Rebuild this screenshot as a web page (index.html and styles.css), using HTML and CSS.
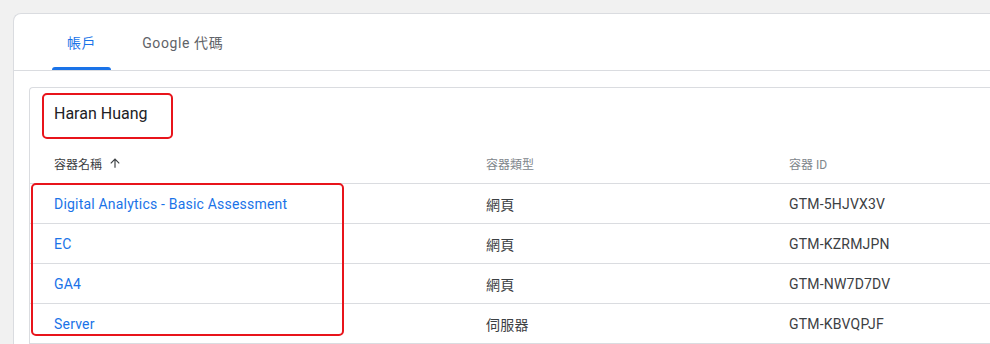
FILE: index.html
```html
<!DOCTYPE html>
<html lang="zh-Hant">
<head>
  <meta charset="UTF-8" />
  <meta name="viewport" content="width=device-width, initial-scale=1" />
  <title>帳戶 - Google 代碼管理工具</title>
  <link rel="stylesheet" href="styles.css">
</head>
<body>
  <div class="page-card">
    <div class="tabs">
      <div class="tab active">帳戶</div>
      <div class="tab">Google 代碼</div>
    </div>

    <div class="account-card">
      <div class="account-name">Haran Huang</div>

      <div class="row header">
        <div class="cell sorted">容器名稱
          <svg class="sort-icon" viewBox="0 0 24 24" width="14" height="14">
            <path d="M4 12l1.41 1.41L11 7.83V20h2V7.83l5.58 5.59L20 12l-8-8-8 8z" fill="currentColor"/>
          </svg>
        </div>
        <div class="cell">容器類型</div>
        <div class="cell">容器 ID</div>
      </div>

      <div class="row">
        <div class="cell"><a href="#">Digital Analytics - Basic Assessment</a></div>
        <div class="cell">網頁</div>
        <div class="cell">GTM-5HJVX3V</div>
      </div>
      <div class="row">
        <div class="cell"><a href="#">EC</a></div>
        <div class="cell">網頁</div>
        <div class="cell">GTM-KZRMJPN</div>
      </div>
      <div class="row">
        <div class="cell"><a href="#">GA4</a></div>
        <div class="cell">網頁</div>
        <div class="cell">GTM-NW7D7DV</div>
      </div>
      <div class="row">
        <div class="cell"><a href="#">Server</a></div>
        <div class="cell">伺服器</div>
        <div class="cell">GTM-KBVQPJF</div>
      </div>

      <!-- highlight boxes drawn over the screenshot -->
      <div class="highlight highlight-name"></div>
      <div class="highlight highlight-list"></div>
    </div>
  </div>
</body>
</html>
```

FILE: styles.css
```css
html {
  overflow: hidden;
}

body {
  margin: 0;
  padding: 13px 0 0 13px;
  background: #f1f1f1;
  font-family: Roboto, "Noto Sans CJK TC", sans-serif;
  color: #3c4043;
  overflow: hidden;
  height: 344px;
  box-sizing: border-box;
}

/* Outer white card, runs off the right edge */
.page-card {
  margin-right: -20px;
  height: 340px;
  background: #fff;
  border: 1px solid #dadce0;
  border-right: none;
  border-radius: 8px 0 0 0;
}

/* Tabs */
.tabs {
  display: flex;
  gap: 16px;
  height: 56px;
  padding-left: 38px;
  border-bottom: 1px solid #dadce0;
}

.tab {
  position: relative;
  display: flex;
  align-items: center;
  padding: 0 15px;
  font-size: 14px;
  letter-spacing: 0.6px;
  color: #5f6368;
}

.tab.active {
  color: #1a73e8;
}

.tab.active::after {
  content: "";
  position: absolute;
  left: 0;
  right: 0;
  bottom: 0;
  height: 3px;
  background: #1a73e8;
  border-radius: 3px 3px 0 0;
}

/* Account card */
.account-card {
  position: relative;
  margin: 16px 0 0 15px;
  background: #fff;
  border: 1px solid #dadce0;
  border-right: none;
  border-radius: 4px 0 0 0;
}

.account-name {
  height: 55px;
  box-sizing: border-box;
  padding: 14px 24px 0;
  font-size: 16px;
  line-height: 24px;
  color: #202124;
}

/* Table rows */
.row {
  display: grid;
  grid-template-columns: 432px 303px 1fr;
  height: 40px;
  padding-left: 24px;
  border-bottom: 1px solid #dadce0;
  align-items: center;
  font-size: 14px;
  letter-spacing: 0.2px;
  color: #3c4043;
}

.row + .row {
  height: 39px;
}

.row.header {
  font-size: 12px;
  letter-spacing: 0;
  color: #80868b;
}

.cell {
  display: flex;
  align-items: center;
}

.cell.sorted {
  color: #3c4043;
}

.sort-icon {
  margin-left: 6px;
  color: #3c4043;
}

.cell a {
  color: #1a73e8;
  text-decoration: none;
}

/* Red annotation boxes */
.highlight {
  position: absolute;
  border: 2.5px solid #e8141b;
  border-radius: 5px;
  box-sizing: border-box;
}

.highlight-name {
  left: 12px;
  top: 5px;
  width: 131px;
  height: 46px;
}

.highlight-list {
  left: 1px;
  top: 95px;
  width: 313px;
  height: 153px;
}
```
